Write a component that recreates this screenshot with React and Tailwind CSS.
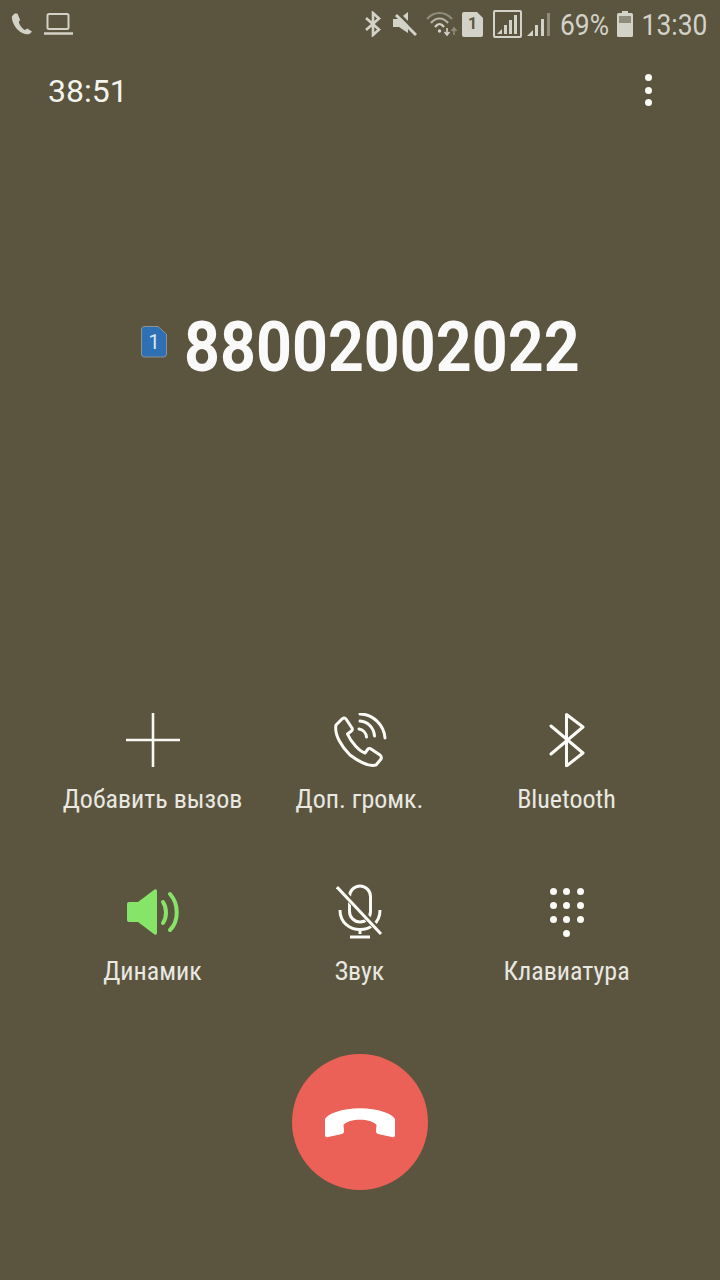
const F = { fontFamily: 'Roboto, "Liberation Sans", sans-serif' };

function Phone() {
  return (
    <svg width="22" height="24" viewBox="0 0 24 26" fill="#d3d2c9">
      <path d="M4 1.5 L1 4.5 C0.5 8 3 15 7 19 C10.5 22.5 16 25 20 24 L23 21.5 L18 18 L15 19.5 C12.5 18 9 14 8.5 10.5 L10 8.5 L7 1.5 Z" />
    </svg>
  );
}
function Laptop() {
  return (
    <svg width="29" height="22" viewBox="0 0 29 22" fill="none" stroke="#d3d2c9" strokeWidth="2">
      <rect x="3.5" y="1" width="21" height="15" rx="1.5" />
      <path d="M0 20.5H29" strokeWidth="2.5" />
    </svg>
  );
}
function BtSmall() {
  return (
    <svg width="18" height="26" viewBox="0 0 18 26" fill="none" stroke="#d3d2c9" strokeWidth="2.6">
      <path d="M2 7 L15 18.5 L9 24 V2 L15 7.5 L2 19" />
    </svg>
  );
}
function Mute() {
  return (
    <svg width="24" height="26" viewBox="0 0 24 26" fill="#d3d2c9">
      <path d="M0 8 H6 L15 1 V22 L6 16 H0 Z" />
      <path d="M4 1 L25 22" stroke="#5b553f" strokeWidth="3" />
      <path d="M3 4 L23 24" stroke="#d3d2c9" strokeWidth="3" />
    </svg>
  );
}
function Wifi() {
  return (
    <svg width="32" height="26" viewBox="0 0 32 26" fill="none" stroke="#8f8c7b" strokeWidth="2.2">
      <path d="M1 8 C8 0 19 0 26 8" />
      <path d="M5 12 C10 6 17 6 22 12" stroke="#b5b3a6" />
      <path d="M9 16 C12 12 15 12 18 16" stroke="#d3d2c9" />
      <circle cx="13.5" cy="20" r="1.7" fill="#d3d2c9" stroke="none" />
      <path d="M21 17v6M18.5 21l2.5 3 2.5-3" stroke="#d3d2c9" strokeWidth="1.6" />
      <path d="M28 24v-6M25.5 20l2.5-3 2.5 3" strokeWidth="1.6" />
    </svg>
  );
}
function SimSmall() {
  return (
    <div className="relative w-[21px] h-[25px]">
      <svg width="21" height="25" viewBox="0 0 21 25" className="absolute inset-0">
        <path d="M2 0 H15 L21 6 V23 A2 2 0 0 1 19 25 H2 A2 2 0 0 1 0 23 V2 A2 2 0 0 1 2 0 Z" fill="#d3d2c9" />
      </svg>
      <span className="absolute inset-0 flex items-center justify-center text-[16px] font-bold text-[#5b553f]" style={F}>1</span>
    </div>
  );
}
function SignalBox() {
  return (
    <div className="w-[29px] h-[28px] border-2 border-[#d3d2c9] rounded-[2px] flex items-end justify-center pb-[2px]">
      <Bars />
    </div>
  );
}
function Bars() {
  return (
    <svg width="22" height="20" viewBox="0 0 22 20" fill="#d3d2c9">
      <path d="M0 20 L5 15 V20 Z" />
      <rect x="7" y="11" width="3" height="9" />
      <rect x="12" y="6" width="3" height="14" />
      <rect x="17" y="1" width="3" height="19" />
    </svg>
  );
}
function Bars2() {
  return (
    <svg width="24" height="24" viewBox="0 0 24 24" fill="#d3d2c9">
      <path d="M0 24 L6 18 V24 Z" />
      <rect x="8" y="13" width="3" height="11" />
      <rect x="14" y="7" width="3" height="17" />
      <rect x="20" y="1" width="3" height="23" fill="#8f8c7b" />
    </svg>
  );
}
function Battery() {
  return (
    <svg width="16" height="26" viewBox="0 0 16 26" fill="#d3d2c9">
      <rect x="5" y="0" width="6" height="3" fill="#d3d2c9" />
      <rect x="0" y="2" width="16" height="24" rx="1.5" />
      <rect x="2" y="5" width="12" height="7" fill="#8f8c7b" />
    </svg>
  );
}

function Plus() {
  return (
    <svg width="54" height="54" viewBox="0 0 54 54" stroke="#f8f8f4" strokeWidth="2.6">
      <path d="M27 0V54M0 27H54" />
    </svg>
  );
}
function Volte() {
  return (
    <svg width="54" height="54" viewBox="0 0 54 54" fill="none" stroke="#fafaf6" strokeWidth="3" strokeLinejoin="round" strokeLinecap="round">
      <path d="M9 6 L3 12 C1 22 9 34 17 42 C25 48 35 54 43 52 L48 46 C49 44 48 43 47 42 L38 36 C37 35 35.5 35.5 35 36 L32 40 C26 38 18 29 14.5 21 L18.5 18 C19.5 17 19.5 16 19 15 L13 6 C12 4.5 10 5 9 6 Z" />
      <path d="M26 16 C30 16.5 33 20 33.5 24" />
      <path d="M27 8 C35 8.5 41 15 41.5 23" />
      <path d="M27 1 C40 1 51 12 52 25" />
    </svg>
  );
}
function BtLarge() {
  return (
    <svg width="36" height="54" viewBox="0 0 36 54" fill="none" stroke="#fafaf6" strokeWidth="3" strokeLinejoin="round" strokeLinecap="round">
      <path d="M2 13 L34 40 L17.5 53 V1.5 L34 14 L2 41" />
    </svg>
  );
}
function Speaker() {
  return (
    <svg width="54" height="46" viewBox="0 0 54 46" fill="#86e468" stroke="none" strokeLinecap="round">
      <path d="M1 15 Q1 13 3 13 H12 L28.5 0.5 Q31 -0.5 31 2 V44 Q31 46.5 28.5 45.5 L12 33 H3 Q1 33 1 31 Z" />
      <path d="M37 13 C41 19 41 28 37 34" fill="none" stroke="#86e468" strokeWidth="4" />
      <path d="M44 5 C53 15 53 32 44 41" fill="none" stroke="#86e468" strokeWidth="4" />
    </svg>
  );
}
function MicOff() {
  return (
    <svg width="48" height="56" viewBox="0 0 48 56" fill="none" stroke="#fafaf6" strokeWidth="3">
      <rect x="13.5" y="2" width="21" height="36" rx="10.5" />
      <path d="M4 26 C4 52 44 52 44 26" />
      <path d="M24 46 V50" />
      <path d="M14 53 H34" />
      <path d="M1 2 L45 49" stroke="#5b553f" strokeWidth="6" />
      <path d="M1 3 L45 50" />
    </svg>
  );
}
function Keypad() {
  const rows = [[1, 1, 1], [1, 1, 1], [1, 1, 1], [0, 1, 0]];
  return (
    <div className="flex flex-col gap-[7px] w-[34px]">
      {rows.map((r, i) => (
        <div key={i} className="flex justify-between">
          {r.map((v, j) => (
            <div key={j} className={v ? "w-[7px] h-[7px] rounded-full bg-[#fafaf6]" : "w-[7px] h-[7px]"} />
          ))}
        </div>
      ))}
    </div>
  );
}
function Hangup() {
  return (
    <svg width="72" height="32" viewBox="0 -2 72 32" fill="#ffffff">
      <path d="M1 11 C3 8 6 6 12 4 C26 -1 46 -1 60 4 C66 6 69 8 71 11 L71 27 C71 29 69 29.5 68 29 L54 26 C53 25.5 52 24.5 52 23.5 L52.5 17 C47 10 25 10 19.5 17 L20 23.5 C20 24.5 19 25.5 18 26 L4 29 C3 29.5 1 29 1 27 Z" />
    </svg>
  );
}

function Action({ icon, label }) {
  return (
    <div className="flex flex-col items-center">
      <div className="h-[60px] flex items-center justify-center">{icon}</div>
      <div className="mt-[14px] text-[26px] leading-[30px] text-[#e9e8e1] whitespace-nowrap [font-stretch:75%]" style={F}>{label}</div>
    </div>
  );
}

export default function App() {
  return (
    <div className="w-[720px] h-[1280px] bg-[#5b553f] flex flex-col overflow-hidden" style={F}>
      <div className="h-[48px] flex items-center justify-between pl-[11px] pr-[13px]">
        <div className="flex items-center gap-[11px]"><Phone /><Laptop /></div>
        <div className="flex items-center text-[#d3d2c9] text-[30px]">
          <BtSmall />
          <div className="ml-[11px]"><Mute /></div>
          <div className="ml-[9px]"><Wifi /></div>
          <div className="ml-[4px]"><SimSmall /></div>
          <div className="ml-[10px]"><SignalBox /></div>
          <div className="ml-[5px]"><Bars2 /></div>
          <span className="ml-[10px] w-[47px] flex justify-center whitespace-nowrap scale-x-[0.88]">69%</span>
          <div className="ml-[9px]"><Battery /></div>
          <span className="ml-[9px] w-[65px] flex justify-center whitespace-nowrap scale-x-[0.88]">13:30</span>
        </div>
      </div>

      <div className="flex items-center justify-between pl-[48px] pr-[68px] mt-[24px] h-[38px]">
        <span className="text-[32px] text-[#f4f4ef] leading-none">38:51</span>
        <div className="flex flex-col gap-[5.5px] -mt-[2px]">
          <div className="w-[7px] h-[7px] rounded-full bg-[#fafaf6]" />
          <div className="w-[7px] h-[7px] rounded-full bg-[#fafaf6]" />
          <div className="w-[7px] h-[7px] rounded-full bg-[#fafaf6]" />
        </div>
      </div>

      <div className="flex items-center mt-[191px] h-[90px] pl-[141px]">
        <div className="relative w-[26px] h-[32px] -mt-[8px]">
          <svg width="26" height="32" viewBox="0 0 26 32" className="absolute inset-0">
            <path d="M3 0.5 H17 L25.5 8 V28 A3 3 0 0 1 22.5 31 H3 A3 3 0 0 1 0.5 28 V3 A3 3 0 0 1 3 0.5 Z" fill="#2f6fb4" stroke="#8d9196" />
          </svg>
          <span className="absolute inset-0 flex items-center justify-center text-[20px] text-[#d9e6f2]">1</span>
        </div>
        <span className="ml-[17px] text-[71px] leading-none font-bold text-[#fafafa] whitespace-nowrap origin-left scale-x-[0.883]">88002002022</span>
      </div>

      <div className="mt-[319px] grid grid-cols-3 gap-y-[68px] pl-[49px] pr-[50px]">
        <Action icon={<Plus />} label="Добавить вызов" />
        <Action icon={<Volte />} label="Доп. громк." />
        <Action icon={<BtLarge />} label="Bluetooth" />
        <Action icon={<Speaker />} label="Динамик" />
        <Action icon={<MicOff />} label="Звук" />
        <Action icon={<Keypad />} label="Клавиатура" />
      </div>

      <div className="flex justify-center mt-[68px]">
        <div className="w-[136px] h-[136px] rounded-full bg-[#eb6157] flex items-center justify-center">
          <Hangup />
        </div>
      </div>
    </div>
  );
}
